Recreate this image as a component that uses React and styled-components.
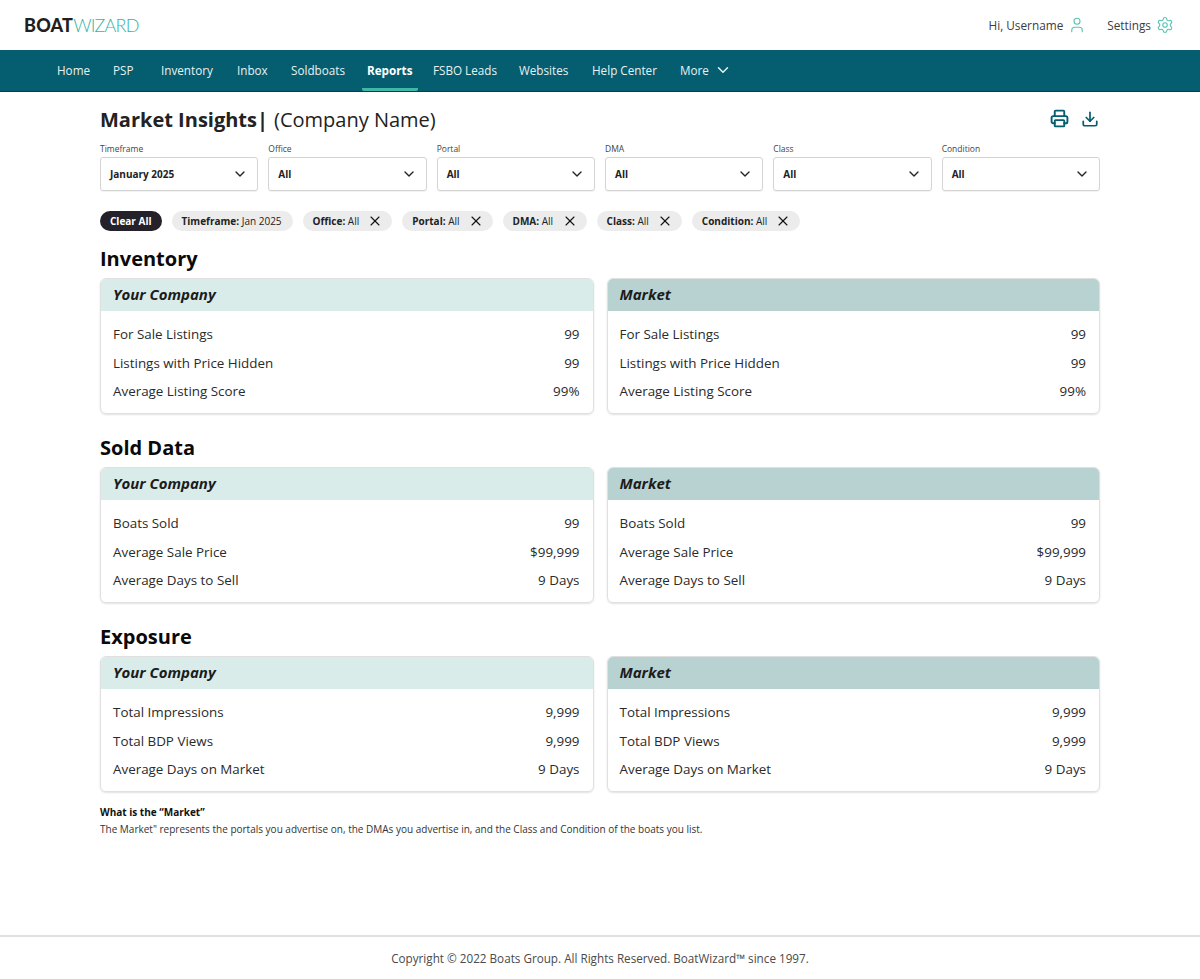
import React from 'react';
import styled, { createGlobalStyle } from 'styled-components';
import { User, Settings, Printer, Download, ChevronDown, X } from 'lucide-react';

const GlobalStyle = createGlobalStyle`
  html, body { margin: 0; padding: 0; background: #fff; }
  body { font-family: "Open Sans", "Liberation Sans", sans-serif; color: #111; }
`;

const Page = styled.div`
  min-height: 979px;
  display: flex;
  flex-direction: column;
`;

const TopBar = styled.header`
  height: 50px;
  display: flex;
  align-items: center;
  justify-content: space-between;
  padding: 0 26px 0 24px;
`;

const Logo = styled.div`
  font-family: "Lato", sans-serif;
  font-size: 18px;
  line-height: 50px;
  letter-spacing: 0.2px;
  color: #231f20;
  font-weight: 900;
  span { font-weight: 300; color: #33b5a5; letter-spacing: -0.8px; }
`;

const UserMenu = styled.div`
  display: flex;
  align-items: center;
  gap: 21px;
`;

const UserLink = styled.a`
  display: flex;
  align-items: center;
  gap: 5px;
  font-size: 11.8px;
  color: #3c3c3c;
  svg { color: #5cc4b4; }
`;

const Nav = styled.nav`
  height: 42px;
  box-sizing: border-box;
  background: #045e6f;
  border-bottom: 1px solid #033f4c;
  display: flex;
  padding-left: 52px;
`;

const NavItem = styled.a`
  box-sizing: border-box;
  width: ${(p) => p.$w}px;
  height: 41px;
  display: flex;
  align-items: center;
  gap: 5px;
  padding: 0 0 2px 5px;
  font-size: 11.7px;
  color: #e9f1f2;
  font-weight: ${(p) => (p.$active ? 700 : 400)};
  ${(p) => p.$active && `
    color: #fff;
    margin-right: 10px;
    padding: 1px 0 0 5px;
    border-bottom: 3px solid #3fb8a8;
    border-radius: 0 0 2px 2px;
  `}
`;

const Main = styled.main`
  flex: 1;
  width: 1000px;
  margin: 0 auto;
`;

const TitleRow = styled.div`
  height: 27px;
  margin-top: 14px;
  display: flex;
  align-items: center;
  justify-content: space-between;
`;

const Title = styled.h1`
  margin: 0;
  font-size: 20px;
  font-weight: 400;
  color: #222;
  b { font-weight: 700; margin-right: 6px; }
`;

const TitleActions = styled.div`
  display: flex;
  align-items: center;
  gap: 12px;
  margin: 0 1px 2px 0;
  svg { color: #045e6f; display: block; }
`;

const Filters = styled.div`
  display: grid;
  grid-template-columns: repeat(6, 1fr);
  gap: 10px;
  margin-top: 10px;
`;

const FilterLabel = styled.div`
  font-size: 8.5px;
  line-height: 12px;
  color: #444;
  margin-bottom: 2px;
`;

const Select = styled.div`
  box-sizing: border-box;
  height: 34px;
  border: 1px solid #d4d4d4;
  border-radius: 3px;
  box-shadow: 0 1px 1px rgba(0, 0, 0, 0.06);
  display: flex;
  align-items: center;
  justify-content: space-between;
  padding: 0 9px 1px;
  font-size: 10px;
  font-weight: 700;
  color: #222;
`;

const Chips = styled.div`
  display: flex;
  gap: 10px;
  margin-top: 20px;
`;

const Chip = styled.div`
  height: 20px;
  box-sizing: border-box;
  border-radius: 10px;
  background: ${(p) => (p.$dark ? '#25212a' : '#ececec')};
  color: ${(p) => (p.$dark ? '#fff' : '#222')};
  display: flex;
  align-items: center;
  padding: 0 ${(p) => (p.$dark ? '10px' : '11px')} 0 10px;
  font-size: 10px;
  font-weight: ${(p) => (p.$dark ? 700 : 400)};
  b { font-weight: 700; }
`;

const FilterChip = styled(Chip)`
  min-width: 84px;
  justify-content: space-between;
  gap: 8px;
  padding-right: 9px;
  svg { color: #111; }
`;

const Section = styled.section`
  margin-top: ${(p) => (p.$first ? '14px' : '20px')};
`;

const SectionTitle = styled.h2`
  margin: 0 0 5px;
  font-size: 20px;
  line-height: 28px;
  font-weight: 700;
  color: #0a0a0a;
`;

const Cards = styled.div`
  display: grid;
  grid-template-columns: 1fr 1fr;
  gap: 13px;
`;

const Card = styled.div`
  box-sizing: border-box;
  height: 136px;
  border: 1px solid #e0e0e0;
  border-radius: 6px;
  box-shadow: 0 1px 2px rgba(0, 0, 0, 0.12);
  overflow: hidden;
`;

const CardHead = styled.div`
  height: 32px;
  box-sizing: border-box;
  display: flex;
  align-items: center;
  padding: 0 13px 2px 12px;
  background: ${(p) => (p.$market ? '#b8d2d1' : '#d9ecea')};
  font-size: 15px;
  font-weight: 700;
  font-style: italic;
  color: #1c1c1c;
`;

const CardBody = styled.div`
  padding: 9px 13px 0 12px;
`;

const Row = styled.div`
  display: flex;
  justify-content: space-between;
  height: 28.5px;
  line-height: 28.5px;
  font-size: 13.4px;
  color: #2a2a2a;
`;

const Note = styled.div`
  margin-top: 12px;
  font-size: 10px;
  line-height: 16.5px;
  color: #333;
  b { font-weight: 700; color: #111; display: block; }
`;

const Footer = styled.footer`
  height: 42px;
  border-top: 2px solid #e0e0e0;
  display: flex;
  align-items: center;
  justify-content: center;
  font-size: 11.7px;
  color: #4a4a4a;
`;

const navItems = [
  ['Home', 56], ['PSP', 48], ['Inventory', 76], ['Inbox', 54], ['Soldboats', 76],
  ['Reports', 56, true], ['FSBO Leads', 86], ['Websites', 73], ['Help Center', 88], ['More', 70],
];
const filters = [
  ['Timeframe', 'January 2025'], ['Office', 'All'], ['Portal', 'All'],
  ['DMA', 'All'], ['Class', 'All'], ['Condition', 'All'],
];
const chips = ['Office', 'Portal', 'DMA', 'Class', 'Condition'];
const sections = [
  ['Inventory', [['For Sale Listings', '99'], ['Listings with Price Hidden', '99'], ['Average Listing Score', '99%']]],
  ['Sold Data', [['Boats Sold', '99'], ['Average Sale Price', '$99,999'], ['Average Days to Sell', '9 Days']]],
  ['Exposure', [['Total Impressions', '9,999'], ['Total BDP Views', '9,999'], ['Average Days on Market', '9 Days']]],
];

function DataCard({ title, market, rows }) {
  return (
    <Card>
      <CardHead $market={market}>{title}</CardHead>
      <CardBody>
        {rows.map(([label, value]) => (
          <Row key={label}><span>{label}</span><span>{value}</span></Row>
        ))}
      </CardBody>
    </Card>
  );
}

export default function App() {
  return (
    <Page>
      <GlobalStyle />
      <TopBar>
        <Logo>BOAT<span>WIZARD</span></Logo>
        <UserMenu>
          <UserLink>Hi, Username <User size={18} strokeWidth={1.5} /></UserLink>
          <UserLink>Settings <Settings size={18} strokeWidth={1.5} /></UserLink>
        </UserMenu>
      </TopBar>
      <Nav>
        {navItems.map(([name, w, active]) => (
          <NavItem key={name} $w={w} $active={active}>
            {name}
            {name === 'More' && <ChevronDown size={18} strokeWidth={2} />}
          </NavItem>
        ))}
      </Nav>
      <Main>
        <TitleRow>
          <Title><b>Market Insights|</b>(Company Name)</Title>
          <TitleActions>
            <Printer size={19} strokeWidth={2.4} />
            <Download size={18} strokeWidth={2.3} />
          </TitleActions>
        </TitleRow>
        <Filters>
          {filters.map(([label, value]) => (
            <div key={label}>
              <FilterLabel>{label}</FilterLabel>
              <Select>{value}<ChevronDown size={16} strokeWidth={2} /></Select>
            </div>
          ))}
        </Filters>
        <Chips>
          <Chip $dark>Clear All</Chip>
          <Chip><span><b>Timeframe:</b> Jan 2025</span></Chip>
          {chips.map((c) => (
            <FilterChip key={c}><span><b>{c}:</b> All</span><X size={16} strokeWidth={1.6} /></FilterChip>
          ))}
        </Chips>
        {sections.map(([title, rows], i) => (
          <Section key={title} $first={i === 0}>
            <SectionTitle>{title}</SectionTitle>
            <Cards>
              <DataCard title="Your Company" rows={rows} />
              <DataCard title="Market" market rows={rows} />
            </Cards>
          </Section>
        ))}
        <Note>
          <b>What is the “Market”</b>
          The Market" represents the portals you advertise on, the DMAs you advertise in, and the Class and Condition of the boats you list.
        </Note>
      </Main>
      <Footer>Copyright © 2022 Boats Group. All Rights Reserved. BoatWizard™ since 1997.</Footer>
    </Page>
  );
}
